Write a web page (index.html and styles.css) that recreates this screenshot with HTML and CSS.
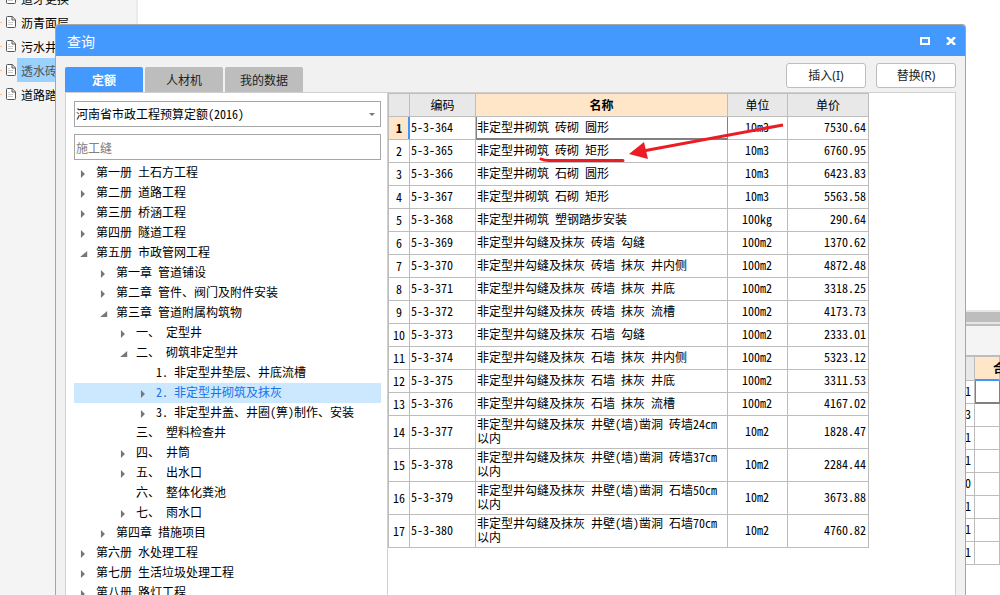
FILE: index.html
```html
<!DOCTYPE html>
<html lang="zh-CN">
<head>
<meta charset="utf-8">
<title>查询</title>
<link rel="stylesheet" href="styles.css">
</head>
<body>
<svg class="defs" aria-hidden="true">
  <symbol id="doc" viewBox="0 0 10 12"><path d="M.5 1.500q0-1 1-1h4.700l3.300 3.300v6.700q0 1-1 1h-7q-1 0-1-1z" fill="#fff" stroke="#555"/><path d="M6 .5v3.500h3.500" fill="none" stroke="#555"/><path d="M2 4.500h2M2 6.500h5M2 8.500h5" stroke="#ccc"/></symbol>
</svg>
<div class="app">
  <ul class="projects">
    <li><svg><use href="#doc"/></svg><span>道牙更换</span></li>
    <li><svg><use href="#doc"/></svg><span>沥青面层</span></li>
    <li><svg><use href="#doc"/></svg><span>污水井</span></li>
    <li class="current"><svg><use href="#doc"/></svg><span>透水砖</span></li>
    <li><svg><use href="#doc"/></svg><span>道路踏</span></li>
  </ul>
  <main class="workspace">
    <div class="canvas"></div>
    <div class="splitter"></div>
    <div class="toolbar"></div>
    <table class="detail">
      <thead><tr><th></th><th class="amount">合</th></tr></thead>
      <tbody>
        <tr><td>1</td><td class="focus"></td></tr>
        <tr><td>3</td><td></td></tr>
        <tr><td>1</td><td></td></tr>
        <tr><td>1</td><td></td></tr>
        <tr><td>0</td><td></td></tr>
        <tr><td>1</td><td></td></tr>
        <tr><td>1</td><td></td></tr>
        <tr><td>1</td><td></td></tr>
      </tbody>
    </table>
  </main>
</div>

<section class="dialog" role="dialog" aria-labelledby="title">
  <header class="titlebar">
    <h1 id="title">查询</h1>
    <button type="button" aria-label="最大化"><svg width="10" height="8"><path d="M1 1h8v6h-8z" fill="none" stroke="#fff" stroke-width="2"/></svg></button>
    <button type="button" aria-label="关闭"><svg width="10" height="8"><path d="M1 0l8 8M9 0l-8 8" stroke="#fff" stroke-width="2.500"/></svg></button>
  </header>
  <div class="bar">
    <nav class="tabs">
      <button type="button" class="active">定额</button>
      <button type="button">人材机</button>
      <button type="button">我的数据</button>
    </nav>
    <div class="actions">
      <button type="button">插入(I)</button>
      <button type="button">替换(R)</button>
    </div>
  </div>
  <div class="panel">
    <div class="side">
      <div class="picker">
        <select aria-label="定额库"><option>河南省市政工程预算定额(2016)</option></select>
        <svg width="6" height="3"><path d="M0 0h6l-3 3z" fill="#777"/></svg>
      </div>
      <input class="search" type="text" placeholder="施工缝" aria-label="搜索">
      <ul class="tree">
        <li class="l0 closed">第一册 土石方工程</li>
        <li class="l0 closed">第二册 道路工程</li>
        <li class="l0 closed">第三册 桥涵工程</li>
        <li class="l0 closed">第四册 隧道工程</li>
        <li class="l0 open">第五册 市政管网工程</li>
        <li class="l1 closed">第一章 管道铺设</li>
        <li class="l1 closed">第二章 管件、阀门及附件安装</li>
        <li class="l1 open">第三章 管道附属构筑物</li>
        <li class="l2 closed">一、 定型井</li>
        <li class="l2 open">二、 砌筑非定型井</li>
        <li class="l3">1. 非定型井垫层、井底流槽</li>
        <li class="l3 closed selected">2. 非定型井砌筑及抹灰</li>
        <li class="l3 closed">3. 非定型井盖、井圈(箅)制作、安装</li>
        <li class="l2">三、 塑料检查井</li>
        <li class="l2 closed">四、 井筒</li>
        <li class="l2 closed">五、 出水口</li>
        <li class="l2">六、 整体化粪池</li>
        <li class="l2 closed">七、 雨水口</li>
        <li class="l1 closed">第四章 措施项目</li>
        <li class="l0 closed">第六册 水处理工程</li>
        <li class="l0 closed">第七册 生活垃圾处理工程</li>
        <li class="l0 closed">第八册 路灯工程</li>
      </ul>
    </div>
    <div class="content">
      <table class="quota">
        <colgroup><col class="c-no"><col class="c-code"><col class="c-name"><col class="c-unit"><col class="c-price"></colgroup>
        <thead><tr><th></th><th>编码</th><th class="sorted">名称</th><th>单位</th><th>单价</th></tr></thead>
        <tbody>
          <tr class="active"><th>1</th><td>5-3-364</td><td>非定型井砌筑 砖砌 圆形</td><td>10m3</td><td>7530.64</td></tr>
          <tr><th>2</th><td>5-3-365</td><td>非定型井砌筑 砖砌 矩形</td><td>10m3</td><td>6760.95</td></tr>
          <tr><th>3</th><td>5-3-366</td><td>非定型井砌筑 石砌 圆形</td><td>10m3</td><td>6423.83</td></tr>
          <tr><th>4</th><td>5-3-367</td><td>非定型井砌筑 石砌 矩形</td><td>10m3</td><td>5563.58</td></tr>
          <tr><th>5</th><td>5-3-368</td><td>非定型井砌筑 塑钢踏步安装</td><td>100kg</td><td>290.64</td></tr>
          <tr><th>6</th><td>5-3-369</td><td>非定型井勾缝及抹灰 砖墙 勾缝</td><td>100m2</td><td>1370.62</td></tr>
          <tr><th>7</th><td>5-3-370</td><td>非定型井勾缝及抹灰 砖墙 抹灰 井内侧</td><td>100m2</td><td>4872.48</td></tr>
          <tr><th>8</th><td>5-3-371</td><td>非定型井勾缝及抹灰 砖墙 抹灰 井底</td><td>100m2</td><td>3318.25</td></tr>
          <tr><th>9</th><td>5-3-372</td><td>非定型井勾缝及抹灰 砖墙 抹灰 流槽</td><td>100m2</td><td>4173.73</td></tr>
          <tr><th>10</th><td>5-3-373</td><td>非定型井勾缝及抹灰 石墙 勾缝</td><td>100m2</td><td>2333.01</td></tr>
          <tr><th>11</th><td>5-3-374</td><td>非定型井勾缝及抹灰 石墙 抹灰 井内侧</td><td>100m2</td><td>5323.12</td></tr>
          <tr><th>12</th><td>5-3-375</td><td>非定型井勾缝及抹灰 石墙 抹灰 井底</td><td>100m2</td><td>3311.53</td></tr>
          <tr><th>13</th><td>5-3-376</td><td>非定型井勾缝及抹灰 石墙 抹灰 流槽</td><td>100m2</td><td>4167.02</td></tr>
          <tr class="tall"><th>14</th><td>5-3-377</td><td>非定型井勾缝及抹灰 井壁(墙)凿洞 砖墙24cm以内</td><td>10m2</td><td>1828.47</td></tr>
          <tr class="tall"><th>15</th><td>5-3-378</td><td>非定型井勾缝及抹灰 井壁(墙)凿洞 砖墙37cm以内</td><td>10m2</td><td>2284.44</td></tr>
          <tr class="tall"><th>16</th><td>5-3-379</td><td>非定型井勾缝及抹灰 井壁(墙)凿洞 石墙50cm以内</td><td>10m2</td><td>3673.88</td></tr>
          <tr class="tall"><th>17</th><td>5-3-380</td><td>非定型井勾缝及抹灰 井壁(墙)凿洞 石墙70cm以内</td><td>10m2</td><td>4760.82</td></tr>
        </tbody>
      </table>
      <svg class="markup" width="250" height="44" viewBox="0 0 250 44" aria-hidden="true">
        <path d="M2 37q3 1.500 8 1.500h74" fill="none" stroke="#ed1c24" stroke-width="3" stroke-linecap="round"/>
        <path d="M244 3L104 29" stroke="#ed1c24" stroke-width="3"/>
        <path d="M90 32l15-12 4 17z" fill="#ed1c24"/>
      </svg>
    </div>
  </div>
</section>
</body>
</html>
```
FILE: styles.css
```css
* { box-sizing: border-box; }
body {
  margin: 0;
  height: 100vh;
  overflow: hidden;
  position: relative;
  background: #fff;
  color: #000;
  font: 12px/14px "Noto Sans Mono CJK SC", "Noto Sans CJK SC", sans-serif;
}
button, input, select { font: inherit; color: inherit; }
ul { list-style: none; margin: 0; padding: 0; }
table { border-collapse: collapse; table-layout: fixed; }
.defs { position: absolute; width: 0; height: 0; }

.app { display: flex; height: 100%; }
.projects {
  width: 138px;
  flex: none;
  background: #f4f4f4;
  border-right: 2px solid #ebebeb;
  margin-top: -14px;
}
.projects li { display: flex; align-items: center; height: 24px; white-space: nowrap; }
.projects li::before { content: ""; width: 2px; height: 1px; margin-right: 4px; background: #ffc27a; }
.projects svg { width: 10px; height: 12px; margin-right: 1px; }
.projects span { flex: 1; padding: 1px 0 0 4px; line-height: 23px; }
.projects .current span { background: #99d1ff; color: #555; }

.workspace { flex: 1; min-width: 0; display: flex; flex-direction: column; }
.canvas { height: 310px; flex: none; }
.splitter { height: 14px; flex: none; background: #bdbdbd; border: solid #e6e6e6; border-width: 2px 0; }
.toolbar { height: 33px; flex: none; background: #f4f4f4; border: solid #bdbdbd; border-width: 2px 0; }
.detail { width: 100%; }
.detail tr { height: 23px; }
.detail th, .detail td { border: 1px solid #bdbdbd; padding: 0 3px 2px; text-align: right; }
.detail th { background: #e8e8e8; border-top: 0; }
.detail .amount {
  width: 25px;
  padding: 0 0 0 18px;
  background: #ffe6c8;
  text-align: left;
  box-shadow: inset 0 -1px #3f96ff;
  border-bottom-color: #3f96ff;
}
.detail .focus { box-shadow: inset 1px 0 #808080, inset 0 -1px #808080; border-color: #3f96ff #808080 #808080; }

.dialog {
  position: absolute;
  top: 24px;
  left: 55px;
  right: 34px;
  bottom: 0;
  display: flex;
  flex-direction: column;
  background: #f1f1f1;
  border: 1px solid #a6a6a6;
  border-bottom: 0;
  border-radius: 4px 4px 0 0;
  overflow: hidden;
}
.titlebar { display: flex; align-items: center; gap: 16px; height: 31px; flex: none; padding: 0 9px 0 11px; background: #4499ff; color: #fff; }
.titlebar h1 { margin: 0; flex: 1; font-size: 14px; font-weight: 400; }
.titlebar button { display: flex; padding: 0; border: 0; background: none; }

.bar { display: flex; justify-content: space-between; align-items: flex-end; height: 36px; flex: none; padding: 0 9px; }
.tabs { display: flex; gap: 2px; }
.tabs button { width: 78px; height: 25px; padding: 0; border: 0; border-radius: 2px 2px 0 0; background: #bdbdbd; color: #222; }
.tabs .active { background: #4499ff; color: #fff; font-weight: 700; }
.actions { display: flex; gap: 10px; padding-bottom: 4px; }
.actions button { width: 80px; height: 25px; padding: 0; border: 1px solid #bdbdbd; border-radius: 3px; background: #fff; color: #222; font-family: "Noto Sans", "Noto Sans CJK SC", sans-serif; }

.panel { flex: 1; min-height: 0; display: flex; margin: 0 9px; border: 1px solid #cfcfcf; border-bottom: 0; background: #fff; }
.side { width: 322px; flex: none; padding: 8px 6px 0 8px; border-right: 1px solid #cfcfcf; overflow: hidden; }
.picker { display: flex; align-items: center; height: 26px; border: 1px solid #a6a6a6; padding-right: 5px; }
.picker select { flex: 1; height: 24px; padding: 0 1px; border: 0; background: none; appearance: none; }
.search { display: block; width: 100%; height: 26px; margin: 7px 0 3px; padding: 0 1px; border: 1px solid #a6a6a6; border-radius: 0; }
.search::placeholder { color: #808080; opacity: 1; }

.tree li { display: flex; align-items: center; height: 20px; padding-bottom: 2px; white-space: pre; }
.tree li::before { content: ""; width: 8px; height: 8px; margin: 4px 8px 0 6px; flex: none; }
.tree .closed::before { background: #777; clip-path: polygon(12% 0, 62% 50%, 12% 100%); }
.tree .open::before { background: #777; clip-path: polygon(90% 12%, 90% 88%, 2% 88%); }
.tree .l1 { padding-left: 20px; }
.tree .l2 { padding-left: 40px; }
.tree .l3 { padding-left: 60px; }
.tree .selected { background: #cce8ff; color: #1a73e8; }

.content { position: relative; flex: 1; min-width: 0; }
.quota { width: 481px; border: 1px solid #bdbdbd; }
.c-no { width: 21px; }
.c-code { width: 66px; }
.c-name { width: 252px; }
.c-unit { width: 60px; }
.c-price { width: 81px; }
.quota tr { height: 23px; }
.quota .tall { height: 33px; }
.quota th, .quota td { padding: 0 2px 2px 1px; border: 1px solid #bdbdbd; text-align: left; }
.quota th { padding: 0; text-align: center; font-weight: 400; }
.quota thead th { background: #e8e8e8; }
.quota thead .sorted { background: #ffe6c8; font-weight: 700; }
.quota td:nth-child(4) { text-align: center; }
.quota td:nth-child(5) { text-align: right; }
.quota .active th { background: #ffe6c8; font-weight: 700; border-right-color: #3f96ff; box-shadow: inset -1px 0 #3f96ff; }
.quota .active td:nth-child(3) { border-color: #3f96ff #808080 #808080; box-shadow: inset 1px -1px #808080; }
.markup { position: absolute; top: 29px; left: 151px; }
```
